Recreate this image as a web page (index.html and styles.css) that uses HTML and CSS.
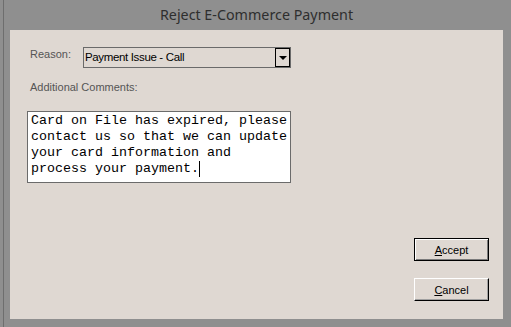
FILE: index.html
```html
<!DOCTYPE html>
<html lang="en">

<head>
    <meta charset="UTF-8">
    <meta name="viewport" content="width=device-width, initial-scale=1.0">
    <title>Reject E-Commerce Payment</title>
    <link rel="stylesheet" href="styles.css">
</head>

<body>
    <div class="window">
        <!-- Title bar -->
        <div class="title-bar">Reject E-Commerce Payment</div>

        <div class="panel">
            <div class="form">
                <div class="row">
                    <span class="label">Reason:</span>
                    <div class="select">
                        <span class="select-value">Payment Issue - Call</span>
                        <span class="select-button"><span class="arrow"></span></span>
                    </div>
                </div>

                <div class="label comments-label">Additional Comments:</div>

                <div class="comments">Card on File has expired, please<br>contact us so that we can update<br>your card information and<br>process your payment.<span class="caret"></span></div>
            </div>

            <div class="actions">
                <button class="btn btn-default"><u>A</u>ccept</button>
                <button class="btn"><u>C</u>ancel</button>
            </div>
        </div>
    </div>
</body>

</html>
```

FILE: styles.css
```css
* {
    margin: 0;
    padding: 0;
    box-sizing: border-box;
}

body {
    background-color: #8f8f8f;
    width: 511px;
    height: 327px;
    overflow: hidden;
    font-family: 'Liberation Sans', Arial, sans-serif;
}

.window {
    margin-left: 3px;
    height: 327px;
    border-left: 1px solid #6e6e6e;
    padding-left: 6px;
}

.title-bar {
    height: 30px;
    line-height: 30px;
    text-align: center;
    padding-right: 8px;
    font-family: 'Noto Sans', sans-serif;
    font-size: 14.3px;
    color: #2e2e2e;
}

.panel {
    width: 493px;
    height: 289px;
    background-color: #dfd8d2;
    display: flex;
    justify-content: space-between;
}

.form {
    padding: 17px 0 0 17px;
}

.row {
    display: flex;
    align-items: flex-start;
}

.label {
    font-size: 11px;
    color: #555;
}

.row .label {
    width: 56px;
    padding: 1px 0 0 3px;
}

.select {
    width: 208px;
    height: 21px;
    border: 1px solid #6a6a6a;
    background-color: #dfd8d2;
    display: flex;
    justify-content: space-between;
}

.select-value {
    font-size: 11.5px;
    letter-spacing: -0.35px;
    color: #000;
    line-height: 19px;
    padding-left: 1px;
}

.select-button {
    width: 15px;
    height: 19px;
    border: 1px solid #000;
    display: flex;
    align-items: center;
    justify-content: center;
}

.arrow {
    width: 0;
    height: 0;
    border-left: 4px solid transparent;
    border-right: 4px solid transparent;
    border-top: 4px solid #000;
    margin-top: 1px;
}

.comments-label {
    margin: 13px 0 0 3px;
}

.comments {
    margin-top: 18px;
    width: 264px;
    height: 72px;
    border: 1px solid #6b6b6b;
    background-color: white;
    padding: 1px 3px;
    font-family: 'Liberation Mono', 'Courier New', monospace;
    font-size: 13.33px;
    line-height: 16px;
    color: #000;
}

.caret {
    display: inline-block;
    width: 1px;
    height: 16px;
    background-color: #000;
    vertical-align: top;
}

.actions {
    display: flex;
    flex-direction: column;
    gap: 17px;
    padding: 208px 14px 0 0;
}

.btn {
    width: 75px;
    height: 23px;
    background-color: #dfd8d2;
    font-family: 'Liberation Sans', Arial, sans-serif;
    font-size: 11px;
    color: #000;
    border: 1px solid;
    border-color: #fff #000 #000 #fff;
    box-shadow: inset -1px -1px 0 #a0a0a0;
}

.btn-default {
    border-color: #000;
    box-shadow: inset 1px 1px 0 #fff, inset -1px -1px 0 #7a7a7a;
}
```
